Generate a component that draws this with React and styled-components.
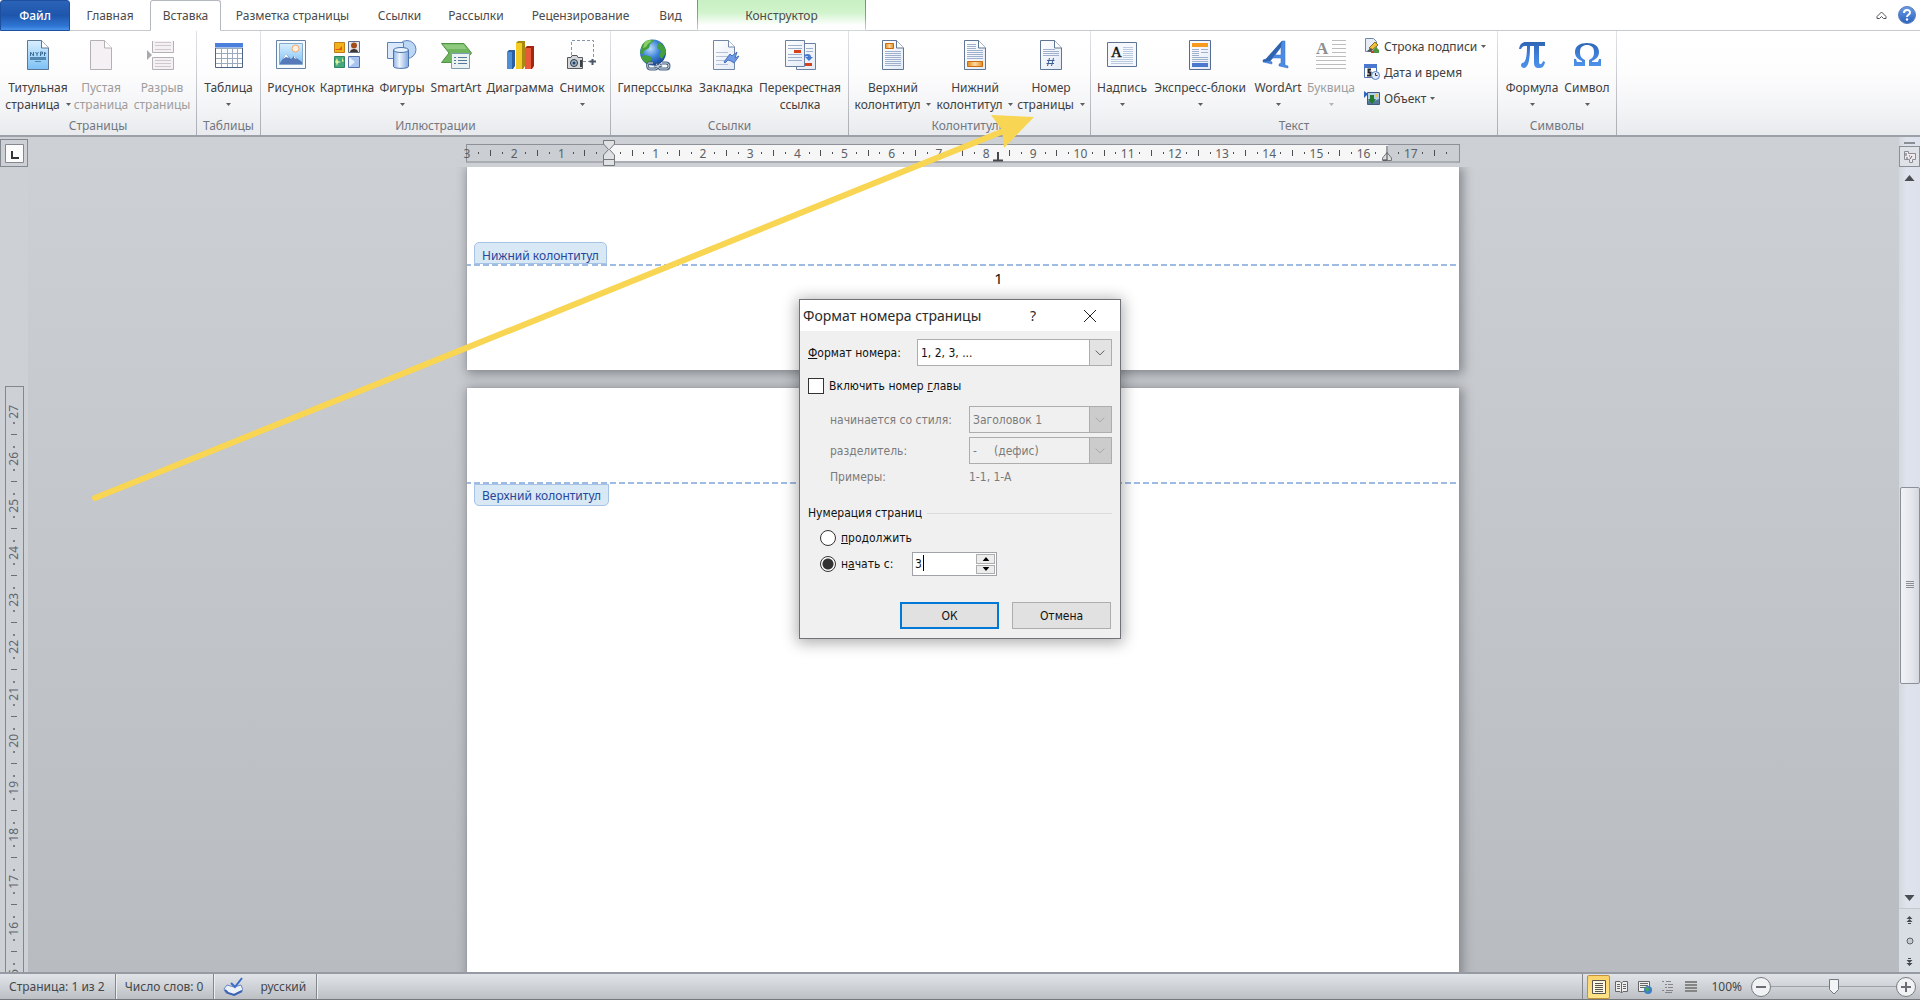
import React, { useState } from 'react';
import styled, { createGlobalStyle, css } from 'styled-components';

const GlobalStyle = createGlobalStyle`
  * {
    box-sizing: border-box;
  }

  body {
    margin: 0;
    overflow: hidden;
    font-family: 'Noto Sans', 'Open Sans', sans-serif;
    font-size: 12px;
    color: #3b3b3b;
  }

  button, input, select {
    font: inherit;
    color: inherit;
  }
`;

const Window = styled.div`
  position: relative;
  display: flex;
  flex-direction: column;
  height: 100vh;
  overflow: hidden;
  background: #cdd0d4;
`;

/* ---------- tabs ---------- */

const TabBar = styled.nav`
  display: flex;
  flex: none;
  height: 31px;
  background: #fff;
`;

const Tab = styled.button`
  flex: none;
  width: ${(p) => p.$width}px;
  padding: 0;
  border: 0;
  border-bottom: 1px solid #c6cacf;
  background: none;
  font-size: 12px;
  color: #4b4b4b;
  white-space: nowrap;

  ${(p) => p.$kind === 'file' && css`
    border: 1px solid #1d4f9f;
    border-radius: 3px 3px 0 0;
    background: linear-gradient(#2a63b8, #1f56ad 50%, #2d74d2 85%, #4a93ea);
    color: #fff;
    font-weight: 500;
  `}

  ${(p) => p.$kind === 'active' && css`
    border: 1px solid #b4b8bf;
    border-bottom-color: #fff;
    border-radius: 3px 3px 0 0;
  `}

  ${(p) => p.$kind === 'context' && css`
    border-left: 1px solid;
    border-right: 1px solid;
    border-image: linear-gradient(#45ab48, #6cc06c 60%, #d5dad8) 1;
    background: linear-gradient(#c8f0c3, #d0f3cb 40%, #fff 85%);
  `}
`;

const TabTail = styled.div`
  display: flex;
  flex: 1;
  justify-content: flex-end;
  align-items: center;
  gap: 11px;
  padding: 0 4px 0;
  border-bottom: 1px solid #c6cacf;
`;

const IconButton = styled.button`
  display: flex;
  padding: 0;
  border: 0;
  background: none;
`;

/* ---------- ribbon ---------- */

const RibbonBar = styled.div`
  display: flex;
  flex: none;
  height: 106px;
  border-bottom: 2px solid #9ca1a8;
  background: linear-gradient(#fff, #fdfdfe 40%, #f3f4f6 75%, #e8eaed);
`;

const Group = styled.section`
  display: flex;
  flex-direction: column;
  width: ${(p) => p.$width}px;
  border-right: 1px solid;
  border-image: linear-gradient(#e2e4e7, #a9adb3) 1;
`;

const GroupBody = styled.div`
  display: flex;
  flex: 1;
  padding: 8px 0 0 ${(p) => p.$inset}px;
`;

const GroupTitle = styled.h2`
  margin: 0;
  height: 18px;
  font-size: 12px;
  font-weight: 400;
  line-height: 18px;
  text-align: center;
  color: #72767f;
`;

const Tool = styled.button`
  display: flex;
  flex-direction: column;
  align-items: center;
  width: ${(p) => p.$width}px;
  padding: 0;
  border: 0;
  background: none;
  font-size: 12px;
  line-height: 17px;
  white-space: nowrap;
  color: #3f3f3f;

  svg.big {
    flex: none;
    margin-bottom: 8px;
  }

  &:disabled {
    color: #9d9d9d;
  }
`;

const ToolLine = styled.span`
  display: flex;
  align-items: center;
  gap: 6px;
  height: 17px;
`;

const SmallTools = styled.div`
  display: flex;
  flex-direction: column;
  gap: 4px;
  padding: 0 0 0 8px;
  margin-top: -4px;
`;

const SmallTool = styled.button`
  display: flex;
  align-items: center;
  gap: 4px;
  height: 22px;
  padding: 0;
  border: 0;
  background: none;
  font-size: 12px;
  white-space: nowrap;
  color: #3f3f3f;
`;

/* ---------- workspace ---------- */

const Workspace = styled.main`
  display: flex;
  flex: 1;
  min-height: 0;
  background: linear-gradient(#cdd0d4, #b8bbbf);
`;

const LeftRail = styled.div`
  display: flex;
  flex: none;
  flex-direction: column;
  align-items: center;
  width: 28px;
  padding-top: 2px;
  background: #cdd1d6;
`;

const TabStop = styled.button`
  display: grid;
  flex: none;
  place-items: center;
  width: 28px;
  height: 28px;
  padding: 0;
  border: 1px solid #84888f;
  background: #cdd1d6;
`;

const VRuler = styled.div`
  flex: 1;
  width: 19px;
  min-height: 0;
  margin-top: 219px;
  padding-top: 18px;
  border: 1px solid #83878d;
  border-bottom: 0;
  overflow: hidden;
`;

const VCell = styled.div`
  display: grid;
  grid-template-rows: 14px 7px 16px 10px;
  height: 47px;
  place-items: center;
  font-size: 12px;
  line-height: 14px;
  color: #62666e;

  span {
    writing-mode: vertical-rl;
    transform: rotate(180deg);
  }
`;

const VDot = styled.i`
  width: 2px;
  height: 2px;
  background: #7c8086;
`;

const VBar = styled.i`
  width: 6px;
  height: 1px;
  background: #6c7076;
`;

const Canvas = styled.div`
  display: flex;
  flex: 1;
  flex-direction: column;
  align-items: center;
  min-width: 0;
  padding: 7px 1px 0 0;
`;

const HRuler = styled.div`
  display: flex;
  flex: none;
  justify-content: space-between;
  align-items: center;
  width: min(994px, 100% - 40px);
  height: 19px;
  margin-bottom: 4px;
  border: 1px solid #8d9197;
  border-bottom-width: 2px;
  border-bottom-color: #a9adb2;
  background: linear-gradient(90deg, #cbced3 142px, #f6f6f7 142px 921px, #cbced3 921px);
`;

const Mark = styled.span`
  display: flex;
  flex: none;
  justify-content: center;
  align-items: center;
  width: 0;
  height: 16px;
  font-size: 12px;
  color: #5b5f66;
`;

const Tick = styled.i`
  flex: none;
  width: 1px;
  height: ${(p) => (p.$long ? 6 : 2)}px;
  background: #4c4f54;
`;

const Pages = styled.div`
  display: flex;
  flex: 1;
  flex-direction: column;
  align-items: center;
  gap: 18px;
  width: 100%;
  min-height: 0;
  overflow: hidden;
`;

const Page = styled.article`
  display: flex;
  flex: none;
  flex-direction: column;
  width: min(992px, 100% - 40px);
  height: ${(p) => p.$height};
  background: #fff;
  box-shadow: 0 0 1px #8d9197, 2px 2px 10px 2px #85898e;
`;

const Zone = styled.div`
  display: flex;
  flex: none;
  height: ${(p) => p.$height}px;
  padding-left: 7px;
  align-items: flex-end;
  border-bottom: 2px solid;
  border-image: repeating-linear-gradient(90deg, #9dbbe3 0 6px, #fff 6px 9px) 2;
`;

const ZoneTag = styled.span`
  height: 22px;
  padding: 0 7px;
  border: 1px solid #a6c3e6;
  border-radius: ${(p) => (p.$below ? '0 0 5px 5px' : '5px 5px 0 0')};
  background: #d8e8f5;
  font-size: 12px;
  line-height: ${(p) => (p.$below ? 22 : 26)}px;
  color: #26479b;
`;

const BelowTag = styled.div`
  display: flex;
  padding-left: 7px;
`;

const PageNumber = styled.p`
  margin: 1px 0 0 71px;
  font-size: 15px;
  line-height: 23px;
  text-align: center;
  color: #111;
`;

/* ---------- scrollbar ---------- */

const ScrollColumn = styled.div`
  display: flex;
  flex: none;
  flex-direction: column;
  align-items: center;
  width: 21px;
  padding-top: 5px;
  background: linear-gradient(90deg, #d3d8de, #dfe3ec 35%, #dde1eb);
`;

const Splitter = styled.div`
  flex: none;
  width: 11px;
  height: 2px;
  margin-bottom: 2px;
  background: #8b8f95;
`;

const ScrollButton = styled.button`
  display: grid;
  flex: none;
  place-items: center;
  width: 21px;
  height: ${(p) => p.$height}px;
  padding: 0;
  border: ${(p) => (p.$framed ? '1px solid #8a9097' : '0')};
  background: ${(p) => (p.$framed ? '#dfe3e7' : 'none')};
`;

const Gap = styled.div`
  flex: ${(p) => p.$grow} 0 0;
`;

const ScrollThumb = styled.div`
  display: grid;
  flex: 196 0 0;
  place-items: center;
  width: 20px;
  border: 1px solid #8b9098;
  border-radius: 2px;
  background: linear-gradient(90deg, #f1f3f7, #e4e6ec 60%, #d4d8de);
`;

const ScrollFoot = styled.div`
  width: 100%;
  border-top: 1px solid #c3c8ce;
  background: #d9dee5;
`;

/* ---------- status bar ---------- */

const StatusBar = styled.footer`
  display: flex;
  flex: none;
  align-items: center;
  height: 28px;
  padding: 0 4px 0 0;
  border-top: 2px solid #959aa3;
  border-bottom: 1px solid #75787c;
  background: linear-gradient(#e0e3e7, #cfd3d7 50%, #bcc0c5);
  color: #44474c;
`;

const StatusItem = styled.span`
  display: flex;
  align-items: center;
  gap: 17px;
  height: 100%;
  padding: 0 10px 0 9px;
  border-right: 1px solid #83878c;
  box-shadow: 1px 0 0 #eceef0;
`;

const StatusRight = styled.div`
  display: flex;
  align-items: center;
  height: 100%;
  margin-left: auto;
  padding-left: 4px;
  border-left: 1px solid #83878c;
`;

const ViewButton = styled.button`
  display: grid;
  place-items: center;
  width: 23px;
  height: 24px;
  padding: 0;
  border: 1px solid ${(p) => (p.$on ? '#c2913a' : 'transparent')};
  border-radius: 2px;
  background: ${(p) => (p.$on ? 'linear-gradient(#fbd36b, #ffe488)' : 'none')};
`;

const ZoomLabel = styled.span`
  margin: 0 9px 0 9px;
`;

const ZoomRange = styled.input`
  appearance: none;
  width: 125px;
  height: 20px;
  margin: 0;
  background: linear-gradient(#9da2a8, #9da2a8) center / 100% 1px no-repeat;

  &::-webkit-slider-thumb {
    appearance: none;
    width: 10px;
    height: 16px;
    border: 0;
    background: url("data:image/svg+xml,%3Csvg xmlns='http://www.w3.org/2000/svg' width='10' height='16'%3E%3Cpath d='M.5.5h9v10L5 15 .5 10.500z' fill='%23f3f4f6' stroke='%23707880'/%3E%3C/svg%3E") no-repeat;
  }
`;

/* ---------- dialog ---------- */

const Dialog = styled.form`
  position: absolute;
  top: 299px;
  left: 50%;
  width: 322px;
  margin-left: -161px;
  border: 1px solid #6f7276;
  background: #f0f0f0;
  box-shadow: 0 2px 14px 2px rgba(0, 0, 0, 0.32);
  font-family: 'DejaVu Sans Condensed', 'Noto Sans', sans-serif;
  font-size: 12px;
  color: #111;
`;

const TitleBar = styled.header`
  display: flex;
  align-items: center;
  height: 31px;
  padding: 0 20px 0 3px;
  background: #fff;
  font-family: 'Noto Sans', sans-serif;
  font-size: 14px;
  color: #2b2b2b;

  h1 {
    flex: 1;
    margin: 0;
    font-size: 14px;
    font-weight: 400;
  }
`;

const TitleButton = styled.button`
  display: grid;
  place-items: center;
  width: 20px;
  height: 30px;
  margin-left: ${(p) => p.$space || 0}px;
  padding: 0;
  border: 0;
  background: none;
`;

const DialogBody = styled.div`
  display: flex;
  flex-direction: column;
  padding: 8px 8px 9px;
`;

const Row = styled.div`
  display: flex;
  align-items: center;
  min-height: ${(p) => p.$height}px;
  margin-top: ${(p) => p.$space || 0}px;
  padding-left: ${(p) => p.$indent || 0}px;
  gap: ${(p) => p.$gap || 0}px;
  color: ${(p) => (p.$dim ? '#7b7b7b' : 'inherit')};
`;

const Caption = styled.label`
  flex: ${(p) => (p.$width ? `0 0 ${p.$width}px` : 'none')};
  white-space: pre;
`;

const Combo = styled.div`
  display: grid;
  flex: 1;
  grid-template-columns: 1fr 22px;
  height: 27px;
  border: 1px solid #adadad;

  select {
    grid-area: 1 / 1 / 2 / 3;
    width: 100%;
    padding: 0 3px;
    border: 0;
    appearance: none;
    background: #fff;
  }

  select:disabled {
    background: #f0f0f0;
    color: #7b7b7b;
    opacity: 1;
  }

  svg {
    grid-area: 1 / 2;
    width: 22px;
    height: 25px;
    border-left: 1px solid #adadad;
    background: ${(p) => (p.$off ? '#cccccc' : '#e3e3e3')};
    pointer-events: none;
  }
`;

const Check = styled.input`
  appearance: none;
  width: 16px;
  height: 16px;
  margin: 0;
  border: 1px solid #333;
  background: #fff;

  &:checked {
    box-shadow: inset 0 0 0 3px #fff;
    background: #333;
  }
`;

const Radio = styled.input`
  appearance: none;
  width: 16px;
  height: 16px;
  margin: 0;
  border: 1px solid #333;
  border-radius: 50%;
  background: #fff;

  &:checked {
    background: radial-gradient(circle, #333 5px, #fff 6px);
  }
`;

const Rule = styled.hr`
  flex: 1;
  margin: 0;
  border: 0;
  border-top: 1px solid #dcdcdc;
`;

const Spinner = styled.div`
  display: grid;
  grid-template-columns: 1fr 20px;
  width: 85px;
  height: 24px;
  border: 1px solid #9fa3a8;
  background: #fff;

  input {
    grid-area: 1 / 1;
    width: 100%;
    min-width: 0;
    padding: 0 2px;
    border: 0;
    outline: 0;
    background: none;
  }
`;

const Caret = styled.i`
  grid-area: 1 / 1;
  width: 1px;
  height: 16px;
  margin: 2px 0 0 10px;
  background: #000;
`;

const Steps = styled.div`
  display: grid;
  grid-area: 1 / 2;
  gap: 1px;
  padding: 1px 1px 1px 0;

  button {
    display: grid;
    place-items: center;
    padding: 0;
    border: 1px solid #adadad;
    background: #ededed;
  }
`;

const Actions = styled.div`
  display: flex;
  justify-content: flex-end;
  gap: 13px;
  margin-top: 26px;
  padding-right: 1px;
`;

const Action = styled.button`
  width: 99px;
  height: 27px;
  padding: 0;
  border: ${(p) => (p.$primary ? '2px solid #0078d7' : '1px solid #adadad')};
  background: #e1e1e1;
`;

const Pointer = styled.svg`
  position: absolute;
  top: 0;
  left: 0;
  pointer-events: none;
`;

/* ---------- icons ---------- */

const Defs = styled.svg`
  position: absolute;
`;

const Gradients = () => (
  <Defs width="0" height="0" aria-hidden="true">
    <defs>
      <linearGradient id="sheet" x1="0" y1="0" x2="1" y2="1">
        <stop offset="0" stopColor="#fff" />
        <stop offset="1" stopColor="#e3eaf6" />
      </linearGradient>
      <linearGradient id="sky" x1="0" y1="0" x2="0" y2="1">
        <stop offset="0" stopColor="#d8efff" />
        <stop offset="1" stopColor="#7dc0f5" />
      </linearGradient>
      <linearGradient id="blueGlyph" x1="0" y1="0" x2="0" y2="1">
        <stop offset="0" stopColor="#2f66b5" />
        <stop offset="0.5" stopColor="#3f7fd8" />
        <stop offset="1" stopColor="#4e92ea" />
      </linearGradient>
      <linearGradient id="tube" x1="0" y1="0" x2="1" y2="0">
        <stop offset="0" stopColor="#8fb4e4" />
        <stop offset="0.4" stopColor="#eef5fd" />
        <stop offset="1" stopColor="#7ea6dc" />
      </linearGradient>
      <linearGradient id="orange" x1="0" y1="0" x2="1" y2="0">
        <stop offset="0" stopColor="#e58a1e" />
        <stop offset="0.5" stopColor="#fbd9a0" />
        <stop offset="1" stopColor="#e58a1e" />
      </linearGradient>
      <radialGradient id="earth" cx="0.4" cy="0.35" r="0.7">
        <stop offset="0" stopColor="#b7dcfb" />
        <stop offset="0.5" stopColor="#3f83d9" />
        <stop offset="1" stopColor="#123f8f" />
      </radialGradient>
      <linearGradient id="help" x1="0" y1="0" x2="0" y2="1">
        <stop offset="0" stopColor="#6b9be6" />
        <stop offset="1" stopColor="#2c62bd" />
      </linearGradient>
    </defs>
  </Defs>
);

const Big = ({ children }) => (
  <svg className="big" width="32" height="32" viewBox="0 0 32 32" aria-hidden="true">
    {children}
  </svg>
);

// page outline with a folded top right corner
const Sheet = ({ fill = 'url(#sheet)', stroke = '#5f7695' }) => (
  <>
    <path d="M5.500 1.500H19.500L26.500 9V30.500H5.500Z" fill={fill} stroke={stroke} />
    <path d="M19.500 1.500V9H26.500" fill="#fff" stroke={stroke} />
  </>
);

const lines = (x1, x2, ys, stroke = '#9fb0cd') => (
  <path d={ys.map((y) => `M${x1} ${y}H${x2}`).join('')} stroke={stroke} fill="none" />
);

const icons = {
  cover: (
    <Big>
      <Sheet fill="url(#sky)" />
      <path d="M8.500 17V13L11.500 17V13M13.500 13L15 15V17M15 15L16.500 13M18.500 17V13H20.500V15H18.500M22.500 17V13L24 15" stroke="#3f6f98" fill="none" />
      <path d="M8 18.500H24M8 19.500H24M8 20.500H24M13 22.500H19" stroke="#5286ae" />
    </Big>
  ),
  blank: (
    <Big>
      <Sheet fill="#f5f0f3" stroke="#b5b0b4" />
    </Big>
  ),
  pageBreak: (
    <Big>
      <path d="M6.500 2V13.500H27.500V2M6.500 30.500V18.500H27.500V30.500Z" fill="#f5f0f3" stroke="#b5b0b4" />
      {lines(9, 25, [3.5, 6.5, 10.5, 21.5, 24.5, 27.5], '#cfc8cc')}
      <path d="M1 11V21L6 16Z" fill="#aaa" />
    </Big>
  ),
  table: (
    <Big>
      <path d="M2 4H30V29H2Z" fill="#fff" />
      <path d="M2 4H30V8.500H2Z" fill="#4a7fdc" />
      <path d="M2 9.500H30M2 14.500H30M2 19.500H30M2 24.500H30M8.500 9V29M14.500 9V29M19.500 9V29M24.500 9V29" stroke="#9aa9bd" fill="none" />
      <path d="M2.500 9V28.500H29.500V9" stroke="#4d6284" fill="none" />
    </Big>
  ),
  picture: (
    <Big>
      <path d="M1.500 1.500H30.500V29.500H1.500Z" fill="#f5fafe" stroke="#6483a6" />
      <path d="M4.500 4.500H27.500V25.500H4.500Z" fill="url(#sky)" stroke="#86a9cc" />
      <circle cx="20.500" cy="9.500" r="3.500" fill="#fdf0e0" stroke="#f0a872" />
      <path d="M5 24L11 15L16 20L19 17L27 23V25H5Z" fill="#5579b9" />
      <path d="M11 15L14 19L11 18L8 20ZM19 17L22 20L19 19Z" fill="#fff" />
    </Big>
  ),
  clip: (
    <Big>
      <path d="M3.500 3.500H13.500V13.500H3.500Z" fill="#f2b21c" stroke="#bf7c18" />
      <path d="M5 10H8L11 7V11H4Z" fill="#e05a12" />
      <path d="M17.500 2.500H28.500V13.500H17.500Z" fill="#e4e8ee" stroke="#5b6d88" />
      <circle cx="23" cy="6.500" r="3" fill="#a34e1a" />
      <path d="M19 13C19 9 27 9 27 13Z" fill="#40342e" />
      <path d="M3.500 17.500H13.500V28.500H3.500Z" fill="#47a880" stroke="#2e8661" />
      <path d="M6 19L7 22L10 23L7 24L6 27L5 24L4 23ZM11 18L12 21L13 22L11 23Z" fill="#d9f2a0" />
      <path d="M17.500 17.500H28.500V28.500H17.500Z" fill="#a8c5f1" stroke="#5570a6" />
      <path d="M18 18L24 23L18 28Z" fill="#e6effc" />
    </Big>
  ),
  shapes: (
    <Big>
      <circle cx="21" cy="10.500" r="9" fill="#bcd7f6" stroke="#5c82ba" />
      <path d="M1.500 3.500H17.500V19.500H1.500Z" fill="#d9e9fb" stroke="#5c82ba" />
      <path d="M7.500 11V27.500C7.500 30 22.500 30 22.500 27.500V11Z" fill="url(#tube)" stroke="#4a73ae" />
      <ellipse cx="15" cy="11" rx="7.500" ry="2.500" fill="#eaf3fd" stroke="#4a73ae" />
    </Big>
  ),
  smartArt: (
    <Big>
      <path d="M1.500 4.500H24L31.500 14L24 23.500H1.500L9 14Z" fill="#6fb560" stroke="#4f9444" />
      <path d="M3 5.500H23.500L27 10H7Z" fill="#90ca80" />
      <path d="M11.500 14.500H29.500V29.500H11.500Z" fill="#eaf3f2" stroke="#7f9db0" />
      <path d="M14 18.500H16M14 21.500H16M14 24.500H16M18 18.500H27M18 21.500H27M18 24.500H27" stroke="#55779a" />
    </Big>
  ),
  chart: (
    <Big>
      <path d="M3 13L5 11H11V27L9 30H3Z" fill="#2a5fa5" />
      <path d="M3 13H8V30H3Z" fill="#4f8fd6" />
      <path d="M12 4L14 2H21V27L19 30H12Z" fill="#a88a10" />
      <path d="M12 4H18V30H12Z" fill="#f3cb25" />
      <path d="M21 9L23 7H30V27L28 30H21Z" fill="#a3260f" />
      <path d="M21 9H27V30H21Z" fill="#e8583a" />
    </Big>
  ),
  snapshot: (
    <Big>
      <path d="M5.500 16V1.500H27.500V20M17 22.500H24" fill="none" stroke="#8795a8" strokeDasharray="3 2" />
      <path d="M26.500 20V26M23.500 22.500H30" stroke="#4a5666" strokeWidth="2" />
      <path d="M1.500 18.500H5L6 16.500H11L12 18.500H16.500V29.500H1.500Z" fill="#d4d7da" stroke="#55595e" />
      <circle cx="8" cy="24" r="3.500" fill="#9fb6cc" stroke="#33373c" />
      <circle cx="8" cy="24" r="1.500" fill="#24446a" />
      <path d="M14 21H16V28H14Z" fill="#3d4146" />
    </Big>
  ),
  link: (
    <Big>
      <circle cx="14" cy="13.500" r="13" fill="url(#earth)" />
      <path d="M3 6C7 0 14 0 15 2L11 5L10 9L5 12L3 16L1 14ZM20 3C25 6 27 10 27 14L23 20L20 17L22 12L18 9ZM6 16L13 18L11 25C7 25 3 21 2 18Z" fill="#43a03c" />
      <path d="M6 2C9 1 12 1 13 2L9 5L7 8L4 9Z" fill="#86cf6a" />
      <path d="M14 24H10C8 24 8 30 11 30H16C19 30 19 26 17 25M23 24H27C31 24 31 30 27 30H22C19 30 19 26 21 25M15 28L23 26" fill="none" stroke="#47607f" strokeWidth="3" />
      <path d="M14 24H10C8 24 8 30 11 30H16C19 30 19 26 17 25M23 24H27C31 24 31 30 27 30H22C19 30 19 26 21 25M15 28L23 26" fill="none" stroke="#cfdbe8" />
    </Big>
  ),
  bookmark: (
    <Big>
      <path d="M3.500 1.500H18.500L24.500 8V30.500H3.500Z" fill="url(#sheet)" stroke="#7287a5" />
      <path d="M18.500 1.500V8H24.500" fill="#fff" stroke="#7287a5" />
      {lines(6, 18, [13.5, 17.5, 21.5, 25.5], '#b4c1d6')}
      <path d="M14 23L20 15L22 17L27 13L25 19L29 17L24 24L21 22L18 21L15 24Z" fill="#6f9ae6" stroke="#4670bd" />
    </Big>
  ),
  crossRef: (
    <Big>
      <path d="M12.500 4.500H31.500V30.500H12.500Z" fill="url(#sheet)" stroke="#6a809f" />
      <path d="M1.500 1.500H20.500V27.500H1.500Z" fill="url(#sheet)" stroke="#6a809f" />
      {lines(4, 18, [6.5, 9.5, 15.5, 18.5, 21.5])}
      {lines(22, 29, [9.5, 12.5])}
      <path d="M10 11H17V14H10ZM21 24H28V27H21Z" fill="#d8401c" />
      <path d="M20 16C24 14 27 15 27 18H29L25 22L21 18H24C24 17 22 17 20 18Z" fill="#4579d0" />
    </Big>
  ),
  header: (
    <Big>
      <Sheet />
      <path d="M8.500 4.500H16.500V9.500H8.500Z" fill="url(#orange)" stroke="#c96d10" />
      {lines(8, 24, [12.5, 14.5, 16.5, 18.5, 20.5, 22.5, 24.5, 26.5])}
    </Big>
  ),
  footer: (
    <Big>
      <Sheet />
      {lines(8, 17, [5.5, 7.5, 9.5])}
      {lines(8, 24, [11.5, 13.5, 15.5, 17.5, 19.5])}
      <path d="M8.500 22.500H23.500V27.500H8.500Z" fill="url(#orange)" stroke="#c96d10" />
    </Big>
  ),
  pageNumber: (
    <Big>
      <Sheet />
      {lines(8, 20, [10.5])}
      {lines(8, 24, [12.5, 14.5, 16.5])}
      <path d="M14.500 19L12.500 27M18.500 19L16.500 27M12 21.500H19.500M11.500 24.500H19" stroke="#3f5f96" fill="none" />
    </Big>
  ),
  textBox: (
    <Big>
      <path d="M1.500 3.500H30.500V27.500H1.500Z" fill="#f4f7fc" stroke="#5e7494" />
      {lines(17, 27, [8.5, 10.5, 12.5, 14.5, 16.5, 18.5], '#bccae0')}
      {lines(5, 27, [20.5, 22.5, 24.5], '#bccae0')}
      <text x="5" y="18" fontFamily="Liberation Serif, serif" fontSize="15" stroke="#111" strokeWidth=".4" fill="#111">A</text>
    </Big>
  ),
  quickParts: (
    <Big>
      <path d="M5.500 1.500H26.500V30.500H5.500Z" fill="url(#sheet)" stroke="#566c90" />
      <path d="M8 4H24V8H8Z" fill="#f79a1e" />
      {lines(8, 15, [10.5, 12.5, 14.5, 16.5])}
      {lines(17, 24, [10.5, 13.5])}
      {lines(8, 24, [18.5, 20.5, 22.5])}
      <path d="M8 24H24V28H8Z" fill="#4b78cd" />
    </Big>
  ),
  wordArt: (
    <Big>
      <path d="M20 2H23V26L26 27V29L17 27V25L19 24V19H11L8 22L10 23V25L1 23V21L4 20ZM19 8L13 16H19Z" fill="#4a8be6" stroke="#3a6fc0" strokeWidth=".5" />
      <path d="M20 2L4 20L1 21V23L8 22L19 8Z" fill="#2f63ae" />
    </Big>
  ),
  dropCap: (
    <Big>
      <text x="1" y="15" fontFamily="Liberation Serif, serif" fontSize="17" fontWeight="700" fill="#8f8f8f">A</text>
      {lines(17, 31, [1.5, 5.5, 9.5, 13.5], '#bdbdbd')}
      {lines(1, 31, [17.5, 21.5, 25.5, 29.5], '#bdbdbd')}
    </Big>
  ),
  formula: (
    <Big>
      <path d="M3 10C4 5 6 3 10 3H29V7H23V23C23 26 26 26 27 22L29 23C28 28 26 29 23 29C19 29 18 27 18 23V7H14C14 18 13 29 8 29C5 29 4 26 6 24C10 24 11 17 11 7H9C7 7 6 8 5 10Z" fill="url(#blueGlyph)" />
    </Big>
  ),
  symbol: (
    <Big>
      <path d="M3 20H5L6 23H11V22C6 20 4 17 4 13C4 7 9 4 16 4C23 4 28 7 28 13C28 17 26 20 21 22V23H27L28 20H30V27H18V21C22 19 23 17 23 13C23 8 20 6 16 6C12 6 9 8 9 13C9 17 10 19 14 21V27H3Z" fill="url(#blueGlyph)" />
    </Big>
  ),
};

const Small = ({ children, size = 16 }) => (
  <svg width={size} height={size} viewBox="0 0 16 16" aria-hidden="true">{children}</svg>
);

const smallIcons = {
  sign: (
    <Small>
      <path d="M1.500 .5H9.500L12.500 3.500V13.500H1.500Z" fill="#e7edf7" stroke="#7187a8" />
      <path d="M5 10L11 4L14 7L8 12Z" fill="#efc03e" stroke="#8a6a1c" />
      <path d="M3 13L7 10L9 12L6 14Z" fill="#555" />
      <path d="M9 15V12L12 9L15 12V15Z" fill="#4f9440" />
      <path d="M7 13H10V15H7Z" fill="#c1412c" />
    </Small>
  ),
  date: (
    <Small>
      <path d="M.5 .5H12.500V13.500H.5Z" fill="#fff" stroke="#5373ae" />
      <path d="M0 0H13V4H0Z" fill="#4a78cf" />
      <path d="M7 5.500H4.500V8.500H6.500V11.500H3" stroke="#222" strokeWidth="2" fill="none" />
      <circle cx="11.500" cy="11.500" r="4" fill="#dfeafb" stroke="#5c80bf" />
      <path d="M11.500 9V11.500H13.500" stroke="#335" fill="none" />
    </Small>
  ),
  object: (
    <Small>
      <path d="M3.500 2.500H15.500V14.500H3.500Z" fill="#b8cfe8" stroke="#3d5c80" />
      <path d="M4 14V11L7 8L10 11L15 9V14Z" fill="#54789c" />
      <path d="M0 1L4 4L0 8Z" fill="#2e66bd" />
      <path d="M8 14L4 9H6V5H10V9H12Z" fill="#207a30" />
      <circle cx="12.500" cy="5.500" r="1.500" fill="#f5c83b" />
    </Small>
  ),
};

const Arrow = ({ color = '#5e5e5e' }) => (
  <svg width="5" height="3" viewBox="0 0 5 3" aria-hidden="true">
    <path d="M0 0H5L2.500 3Z" fill={color} />
  </svg>
);

const Chevron = ({ color }) => (
  <svg viewBox="0 0 22 25" aria-hidden="true">
    <path d="M6 10.500L10.500 15L15 10.500" fill="none" stroke={color} />
  </svg>
);

const Triangle = ({ up, width = 11, height = 6, color = '#4a4d52' }) => (
  <svg width={width} height={height} viewBox="0 0 10 6" aria-hidden="true">
    <path d={up ? 'M5 0L10 6H0Z' : 'M0 0H10L5 6Z'} fill={color} />
  </svg>
);

const DoubleArrow = ({ up }) => (
  <svg width="7" height="8" viewBox="0 0 7 8" aria-hidden="true">
    <path
      d={up ? 'M3.500 0L6.500 3H.5ZM3.500 3L6.500 6H.5ZM2 7H5V8H2Z' : 'M2 0H5V1H2ZM.5 2H6.500L3.500 5ZM.5 5H6.500L3.500 8Z'}
      fill="#46494e"
    />
  </svg>
);

/* ---------- content ---------- */

const tabs = [
  { label: 'Файл', width: 70, kind: 'file' },
  { label: 'Главная', width: 80 },
  { label: 'Вставка', width: 71, kind: 'active' },
  { label: 'Разметка страницы', width: 143 },
  { label: 'Ссылки', width: 71 },
  { label: 'Рассылки', width: 82 },
  { label: 'Рецензирование', width: 127 },
  { label: 'Вид', width: 53 },
  { label: 'Конструктор', width: 169, kind: 'context' },
];

const groups = [
  {
    title: 'Страницы',
    width: 197,
    inset: 6,
    tools: [
      { icon: 'cover', text: ['Титульная', 'страница'], width: 64, menu: true },
      { icon: 'blank', text: ['Пустая', 'страница'], width: 62, off: true },
      { icon: 'pageBreak', text: ['Разрыв', 'страницы'], width: 60, off: true },
    ],
  },
  {
    title: 'Таблицы',
    width: 64,
    inset: 0,
    tools: [{ icon: 'table', text: ['Таблица'], width: 64, menu: true }],
  },
  {
    title: 'Иллюстрации',
    width: 350,
    tools: [
      { icon: 'picture', text: ['Рисунок'], width: 54 },
      { icon: 'clip', text: ['Картинка'], width: 58 },
      { icon: 'shapes', text: ['Фигуры'], width: 52, menu: true },
      { icon: 'smartArt', text: ['SmartArt'], width: 56 },
      { icon: 'chart', text: ['Диаграмма'], width: 72 },
      { icon: 'snapshot', text: ['Снимок'], width: 52, menu: true },
    ],
  },
  {
    title: 'Ссылки',
    width: 238,
    tools: [
      { icon: 'link', text: ['Гиперссылка'], width: 82 },
      { icon: 'bookmark', text: ['Закладка'], width: 60 },
      { icon: 'crossRef', text: ['Перекрестная', 'ссылка'], width: 88 },
    ],
  },
  {
    title: 'Колонтитулы',
    width: 242,
    tools: [
      { icon: 'header', text: ['Верхний', 'колонтитул'], width: 82, menu: true },
      { icon: 'footer', text: ['Нижний', 'колонтитул'], width: 82, menu: true },
      { icon: 'pageNumber', text: ['Номер', 'страницы'], width: 70, menu: true },
    ],
  },
  {
    title: 'Текст',
    width: 407,
    tools: [
      { icon: 'textBox', text: ['Надпись'], width: 56, menu: true },
      { icon: 'quickParts', text: ['Экспресс-блоки'], width: 100, menu: true },
      { icon: 'wordArt', text: ['WordArt'], width: 56, menu: true },
      { icon: 'dropCap', text: ['Буквица'], width: 50, menu: true, off: true },
    ],
    small: [
      { icon: 'sign', text: 'Строка подписи', menu: true },
      { icon: 'date', text: 'Дата и время' },
      { icon: 'object', text: 'Объект', menu: true },
    ],
  },
  {
    title: 'Символы',
    width: 119,
    tools: [
      { icon: 'formula', text: ['Формула'], width: 62, menu: true },
      { icon: 'symbol', text: ['Символ'], width: 48, menu: true },
    ],
  },
];

const RibbonTool = ({ icon, text, width, menu, off }) => (
  <Tool $width={width} disabled={off}>
    {icons[icon]}
    <ToolLine>{text[0]}</ToolLine>
    <ToolLine>
      {text[1]}
      {menu && <Arrow color={off ? '#b5b5b5' : undefined} />}
    </ToolLine>
  </Tool>
);

const Ribbon = () => (
  <RibbonBar>
    {groups.map((g) => (
      <Group key={g.title} $width={g.width}>
        <GroupBody $inset={g.inset ?? 3}>
          {g.tools.map((t) => (
            <RibbonTool key={t.icon} {...t} />
          ))}
          {g.small && (
            <SmallTools>
              {g.small.map((s) => (
                <SmallTool key={s.icon}>
                  {smallIcons[s.icon]}
                  {s.text}
                  {s.menu && <Arrow />}
                </SmallTool>
              ))}
            </SmallTools>
          )}
        </GroupBody>
        <GroupTitle>{g.title}</GroupTitle>
      </Group>
    ))}
  </RibbonBar>
);

const Marker = styled.svg`
  flex: none;
`;

const IndentMarkers = () => (
  <Marker width="12" height="26" viewBox="0 0 12 26" aria-hidden="true">
    <path d="M.5 .5H11.500V4L6.500 9.500L11.500 15V25.500H.5V15L5.500 9.500L.5 4Z" fill="#dfe1e3" stroke="#74787d" />
    <path d="M.5 19.500H11.500" stroke="#74787d" />
  </Marker>
);

const RightIndent = () => (
  <Marker width="10" height="16" viewBox="0 0 10 16" aria-hidden="true">
    <path d="M.5 15.500V13L5 7.500L9.500 13V15.500Z" fill="#dcdee0" stroke="#74787d" />
    <path d="M5 1V15H1" fill="none" stroke="#45484c" />
  </Marker>
);

const CenterStop = () => (
  <Marker width="10" height="18" viewBox="0 0 10 18" aria-hidden="true">
    <path d="M5 8V16M0 16.500H10" fill="none" stroke="#45484c" strokeWidth="2" />
  </Marker>
);

const HorizontalRuler = () => {
  // quarter centimetre marks, zero is the left margin
  const marks = [];
  for (let q = -12; q <= 72; q++) {
    let body = <Tick $long={q % 4 !== 0 && q % 2 === 0} />;
    if (q === 0) body = <IndentMarkers />;
    else if (q === 33) body = <CenterStop />;
    else if (q === 66) body = <RightIndent />;
    else if (q === 72) body = null;
    else if (q % 4 === 0) body = Math.abs(q / 4);
    marks.push(<Mark key={q}>{body}</Mark>);
  }
  return <HRuler>{marks}</HRuler>;
};

const VerticalRuler = () => (
  <VRuler>
    {[27, 26, 25, 24, 23, 22, 21, 20, 19, 18, 17, 16, 15].map((n) => (
      <VCell key={n}>
        <span>{n}</span>
        <VDot />
        <VBar />
        <VDot />
      </VCell>
    ))}
  </VRuler>
);

const Scrollbar = () => (
  <ScrollColumn>
    <Splitter />
    <ScrollButton $height={21} $framed aria-label="Линейка">
      <svg width="13" height="13" viewBox="0 0 13 13">
        <path d="M1.500 1.500H5.500V3.500H12.500V9.500H9.500V12.500H6.500V9.500H1.500Z" fill="#f0e9ed" stroke="#8a8e94" />
        <path d="M3 3V6M6 6H7M9 6L7 9M3 8H5" stroke="#5c6066" fill="none" />
      </svg>
    </ScrollButton>
    <ScrollButton $height={22} aria-label="Вверх"><Triangle up /></ScrollButton>
    <Gap $grow={299} />
    <ScrollThumb>
      <svg width="8" height="8" viewBox="0 0 8 8">
        <path d="M0 .5H8M0 2.500H8M0 4.500H8M0 6.500H8" stroke="#8b8f95" />
      </svg>
    </ScrollThumb>
    <Gap $grow={205} />
    <ScrollButton $height={20} aria-label="Вниз"><Triangle /></ScrollButton>
    <ScrollFoot>
      <ScrollButton $height={21} aria-label="Предыдущая страница"><DoubleArrow up /></ScrollButton>
      <ScrollButton $height={21} aria-label="Выбор объекта">
        <svg width="8" height="8" viewBox="0 0 8 8">
          <circle cx="4" cy="4" r="3" fill="#c6cace" stroke="#5f6368" />
        </svg>
      </ScrollButton>
      <ScrollButton $height={21} aria-label="Следующая страница"><DoubleArrow /></ScrollButton>
    </ScrollFoot>
  </ScrollColumn>
);

const ZoomKnob = ({ plus }) => (
  <svg width="20" height="20" viewBox="0 0 20 20" aria-hidden="true">
    <circle cx="10" cy="10" r="9.500" fill="#f1f2f4" stroke="#777b81" />
    <path d={plus ? 'M5 10H15M10 5V15' : 'M5 10H15'} stroke="#6a6e74" strokeWidth="2" />
  </svg>
);

const viewIcons = [
  <path key="0" d="M1.500 1.500H14.500V14.500H1.500ZM4 4.500H12M4 6.500H12M4 8.500H12M4 10.500H12M4 12.500H12" fill="#fdf6dc" stroke="#555" />,
  <path key="1" d="M1.500 2.500H6L7.500 4L9 2.500H13.500V12.500H9L7.500 14L6 12.500H1.500ZM7.500 4V14M3 5.500H6M3 7.500H6M3 9.500H6M9 5.500H12M9 7.500H12M9 9.500H12" fill="#eee" stroke="#666" />,
  <g key="2">
    <path d="M1.500 2.500H12.500V12.500H1.500ZM3 4.500H11M3 6.500H11M3 8.500H8" fill="#eee" stroke="#666" />
    <circle cx="11" cy="11" r="4" fill="#3b7fc4" />
    <path d="M8 9L11 8L12 11L10 13Z" fill="#4fa74a" />
  </g>,
  <path key="3" d="M2 2.500H4M6 2.500H11M5 5.500H7M8 5.500H13M5 8.500H7M8 8.500H13M2 11.500H4M6 11.500H13M5 13.500H12" fill="none" stroke="#858585" />,
  <path key="4" d="M2 3H14M2 6H14M2 9H14M2 12H14" fill="none" stroke="#858585" strokeWidth="2" />,
];

const Status = () => {
  const [view, setView] = useState(0);
  const [zoom, setZoom] = useState(50);
  return (
    <StatusBar>
      <StatusItem>Страница: 1 из 2</StatusItem>
      <StatusItem>Число слов: 0</StatusItem>
      <StatusItem>
        <svg width="20" height="20" viewBox="0 0 20 20" aria-hidden="true">
          <path d="M1 12L4 8L11 10L18 8L20 13L12 18L3 16Z" fill="#edf1f8" stroke="#6485c2" />
          <path d="M2 13L5 16L11 18L19 14" fill="none" stroke="#3a62b4" strokeWidth="2" />
          <path d="M8 6L12 10L19 1" fill="none" stroke="#3b6bcb" strokeWidth="2" />
        </svg>
        русский
      </StatusItem>
      <StatusRight>
        {viewIcons.map((icon, i) => (
          <ViewButton key={i} $on={view === i} onClick={() => setView(i)} aria-label={`Режим ${i + 1}`}>
            <Small>{icon}</Small>
          </ViewButton>
        ))}
        <ZoomLabel>100%</ZoomLabel>
        <IconButton aria-label="Уменьшить"><ZoomKnob /></IconButton>
        <ZoomRange type="range" aria-label="Масштаб" value={zoom} onChange={(e) => setZoom(e.target.value)} />
        <IconButton aria-label="Увеличить"><ZoomKnob plus /></IconButton>
      </StatusRight>
    </StatusBar>
  );
};

const PageFormatDialog = () => {
  const [chapter, setChapter] = useState(false);
  const [mode, setMode] = useState('start');
  const [start, setStart] = useState(3);

  return (
    <Dialog onSubmit={(e) => e.preventDefault()}>
      <TitleBar>
        <h1>Формат номера страницы</h1>
        <TitleButton type="button" aria-label="Справка">?</TitleButton>
        <TitleButton type="button" $space={37} aria-label="Закрыть">
          <svg width="14" height="14" viewBox="0 0 14 14">
            <path d="M1 1L13 13M13 1L1 13" stroke="#222" />
          </svg>
        </TitleButton>
      </TitleBar>
      <DialogBody>
        <Row $height={27}>
          <Caption $width={109} htmlFor="format"><u>Ф</u>ормат номера:</Caption>
          <Combo>
            <select id="format"><option>1, 2, 3, ...</option></select>
            <Chevron color="#555" />
          </Combo>
        </Row>
        <Row $height={16} $space={12} $gap={5}>
          <Check id="chapter" type="checkbox" checked={chapter} onChange={(e) => setChapter(e.target.checked)} />
          <Caption htmlFor="chapter">Включить номер <u>г</u>лавы</Caption>
        </Row>
        <Row $height={27} $space={12} $indent={22} $dim>
          <Caption $width={139} htmlFor="style">начинается со стиля:</Caption>
          <Combo $off={!chapter}>
            <select id="style" disabled={!chapter}><option>Заголовок 1</option></select>
            <Chevron color="#a5a5a5" />
          </Combo>
        </Row>
        <Row $height={27} $space={4} $indent={22} $dim>
          <Caption $width={139} htmlFor="separator">разделитель:</Caption>
          <Combo $off={!chapter}>
            <select id="separator" disabled={!chapter}>
              <option>-{'\u00a0\u00a0\u00a0\u00a0\u00a0'}(дефис)</option>
            </select>
            <Chevron color="#a5a5a5" />
          </Combo>
        </Row>
        <Row $height={18} $space={4} $indent={22} $dim>
          <Caption as="span" $width={139}>Примеры:</Caption>
          <span>1-1, 1-A</span>
        </Row>
        <Row $height={18} $space={18} $gap={5}>
          Нумерация страниц
          <Rule />
        </Row>
        <Row $height={16} $space={8} $indent={12} $gap={5}>
          <Radio id="continue" type="radio" name="mode" checked={mode === 'continue'} onChange={() => setMode('continue')} />
          <Caption htmlFor="continue"><u>п</u>родолжить</Caption>
        </Row>
        <Row $height={24} $space={6} $indent={12} $gap={5}>
          <Radio id="start" type="radio" name="mode" checked={mode === 'start'} onChange={() => setMode('start')} />
          <Caption $width={66} htmlFor="start">н<u>а</u>чать с:</Caption>
          <Spinner>
            <input aria-label="Начать с" value={start} onChange={(e) => setStart(Number(e.target.value) || 0)} />
            <Caret />
            <Steps>
              <button type="button" aria-label="Больше" onClick={() => setStart(start + 1)}><Triangle up width={8} height={4} color="#000" /></button>
              <button type="button" aria-label="Меньше" onClick={() => setStart(start - 1)}><Triangle width={8} height={4} color="#000" /></button>
            </Steps>
          </Spinner>
        </Row>
        <Actions>
          <Action $primary type="submit">ОК</Action>
          <Action type="button">Отмена</Action>
        </Actions>
      </DialogBody>
    </Dialog>
  );
};

const App = () => (
  <>
    <GlobalStyle />
    <Gradients />
    <Window>
      <TabBar>
        {tabs.map((t) => (
          <Tab key={t.label} $width={t.width} $kind={t.kind}>{t.label}</Tab>
        ))}
        <TabTail>
          <IconButton aria-label="Свернуть ленту">
            <svg width="11" height="9" viewBox="0 0 11 9">
              <path d="M5.500 1L10 5.500V7.500H7.500L5.500 5.500L3.500 7.500H1V5.500Z" fill="#fff" stroke="#4f5358" />
            </svg>
          </IconButton>
          <IconButton aria-label="Справка">
            <svg width="18" height="18" viewBox="0 0 18 18">
              <circle cx="9" cy="9" r="8.500" fill="url(#help)" stroke="#5a7fc0" />
              <path d="M6 7C6 3 12 3 12 6.500C12 9 9 8.500 9 11" fill="none" stroke="#fff" strokeWidth="2" />
              <circle cx="9" cy="13.500" r="1.200" fill="#fff" />
            </svg>
          </IconButton>
        </TabTail>
      </TabBar>
      <Ribbon />
      <Workspace>
        <LeftRail>
          <TabStop aria-label="Табуляция">
            <svg width="19" height="19" viewBox="0 0 19 19">
              <path d="M.5 .5H18.500V18.500H.5Z" fill="#fbfbfb" stroke="#84888f" />
              <path d="M7 7V14H14" fill="none" stroke="#333" strokeWidth="2" />
            </svg>
          </TabStop>
          <VerticalRuler />
        </LeftRail>
        <Canvas>
          <HorizontalRuler />
          <Pages>
            <Page $height="203px">
              <Zone $height={99}>
                <ZoneTag>Нижний колонтитул</ZoneTag>
              </Zone>
              <PageNumber>1</PageNumber>
            </Page>
            <Page $height="100%">
              <Zone $height={96} />
              <BelowTag>
                <ZoneTag $below>Верхний колонтитул</ZoneTag>
              </BelowTag>
            </Page>
          </Pages>
        </Canvas>
        <Scrollbar />
      </Workspace>
      <Status />
      <PageFormatDialog />
      <Pointer width="1040" height="510" viewBox="0 0 1040 510" aria-hidden="true">
        <path d="M95 498L1006 130" stroke="#f8d552" strokeWidth="6" strokeLinecap="round" />
        <path d="M1034 117L991 115L1002 130L1004 148Z" fill="#f8d552" />
      </Pointer>
    </Window>
  </>
);

export default App;
